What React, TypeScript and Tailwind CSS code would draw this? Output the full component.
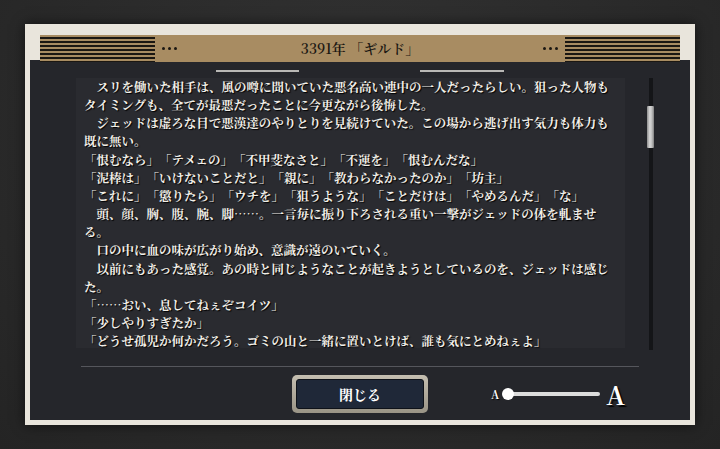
import React from "react";

const lines = [
  "　スリを働いた相手は、風の噂に聞いていた悪名高い連中の一人だったらしい。狙った人物も",
  "タイミングも、全てが最悪だったことに今更ながら後悔した。",
  "　ジェッドは虚ろな目で悪漢達のやりとりを見続けていた。この場から逃げ出す気力も体力も",
  "既に無い。",
  "「恨むなら」「テメェの」「不甲斐なさと」「不運を」「恨むんだな」",
  "「泥棒は」「いけないことだと」「親に」「教わらなかったのか」「坊主」",
  "「これに」「懲りたら」「ウチを」「狙うような」「ことだけは」「やめるんだ」「な」",
  "　頭、顔、胸、腹、腕、脚……。一言毎に振り下ろされる重い一撃がジェッドの体を軋ませ",
  "る。",
  "　口の中に血の味が広がり始め、意識が遠のいていく。",
  "　以前にもあった感覚。あの時と同じようなことが起きようとしているのを、ジェッドは感じ",
  "た。",
  "「……おい、息してねぇぞコイツ」",
  "「少しやりすぎたか」",
  "「どうせ孤児か何かだろう。ゴミの山と一緒に置いとけば、誰も気にとめねぇよ」",
];

const serif =
  "font-['Noto_Serif_CJK_JP','Liberation_Serif','Noto_Sans_CJK_JP',serif]";

function Stripes() {
  return (
    <div className="w-[115px] h-full bg-[repeating-linear-gradient(to_bottom,#a88c62_0px,#a88c62_2px,#1b1712_2px,#1b1712_4px)]" />
  );
}

function Dots() {
  return (
    <div className="flex gap-[3px] items-center">
      <div className="w-[3px] h-[3px] rounded-full bg-[#1b1712]" />
      <div className="w-[3px] h-[3px] rounded-full bg-[#1b1712]" />
      <div className="w-[3px] h-[3px] rounded-full bg-[#1b1712]" />
    </div>
  );
}

export default function App() {
  return (
    <div className="w-[720px] h-[449px] overflow-hidden bg-[#2a2a2a] bg-[radial-gradient(ellipse_at_50%_30%,#333333_0%,#2a2a2a_60%,#242424_100%)] pt-[24px] pl-[25px]">
      <div className="w-[670px] h-[401px] bg-[#e9e5dc] pt-[11px] px-[5px] pb-[5px] flex flex-col shadow-[0_0_12px_rgba(0,0,0,0.6)]">
        {/* header */}
        <div className="px-[10px] h-[25px] relative z-10">
          <div className="h-[27px] bg-[#a88c62] flex items-center">
            <Stripes />
            <div className="ml-[7px]">
              <Dots />
            </div>
            <div
              className={`flex-1 text-center text-[14px] text-[#1b1712] font-semibold [text-spacing-trim:space-all] ${serif}`}
            >
              3391年 「ギルド」
            </div>
            <div className="mr-[7px]">
              <Dots />
            </div>
            <Stripes />
          </div>
        </div>
        {/* dark panel */}
        <div className="flex-1 bg-[#25262b] flex flex-col">
          <div className="flex pt-[10px]">
            <div className="ml-[186px] w-[83px] h-[2px] bg-[#b9b8b5]" />
            <div className="ml-[121px] w-[84px] h-[2px] bg-[#b9b8b5]" />
          </div>
          <div className="flex mt-[6px]">
            <div
              className={`ml-[46px] w-[549px] h-[270px] bg-[#2a2b30] pl-[8px] pt-[0px] text-[12.5px] leading-[18.15px] font-bold text-[#f2efe8] [text-shadow:1px_1px_1px_#000] [text-spacing-trim:space-all] ${serif}`}
            >
              {lines.map((l, i) => (
                <div key={i} className="whitespace-nowrap">
                  {l}
                </div>
              ))}
            </div>
            <div className="ml-[24px] w-[4px] h-[272px] bg-[#141518] relative">
              <div className="absolute left-[-2px] top-[28px] w-[7px] h-[42px] rounded-[1px] bg-[linear-gradient(to_right,#8d8d8d,#d8d8d8_40%,#bdbdbd_70%,#7f7f7f)]" />
            </div>
          </div>
          <div className="ml-[51px] mt-[16px] w-[558px] h-[1px] bg-[#55565c]" />
          <div className="flex items-center mt-[8px]">
            <div className="ml-[262px] w-[136px] h-[38px] rounded-[5px] bg-[linear-gradient(to_bottom,#c4beb0,#9a9486)] p-[4px]">
              <div
                className={`w-full h-full rounded-[3px] bg-[#1f2838] border border-[#0e1219] flex items-center justify-center text-[14px] text-white font-bold ${serif}`}
              >
                閉じる
              </div>
            </div>
            <div className="ml-[63px] flex items-center">
              <span
                className={`text-[11px] font-bold text-white [text-shadow:1px_1px_1px_#000] ${serif}`}
              >
                A
              </span>
              <div className="ml-[3px] relative w-[98px] h-[12px] flex items-center">
                <div className="ml-[4px] w-[94px] h-[4px] rounded-full bg-[#dcdcdc]" />
                <div className="absolute left-0 top-0 w-[12px] h-[12px] rounded-full bg-white" />
              </div>
              <span
                className={`ml-[6px] text-[25px] leading-none font-bold text-white [text-shadow:2px_2px_1px_#000] ${serif}`}
              >
                A
              </span>
            </div>
          </div>
        </div>
      </div>
    </div>
  );
}
